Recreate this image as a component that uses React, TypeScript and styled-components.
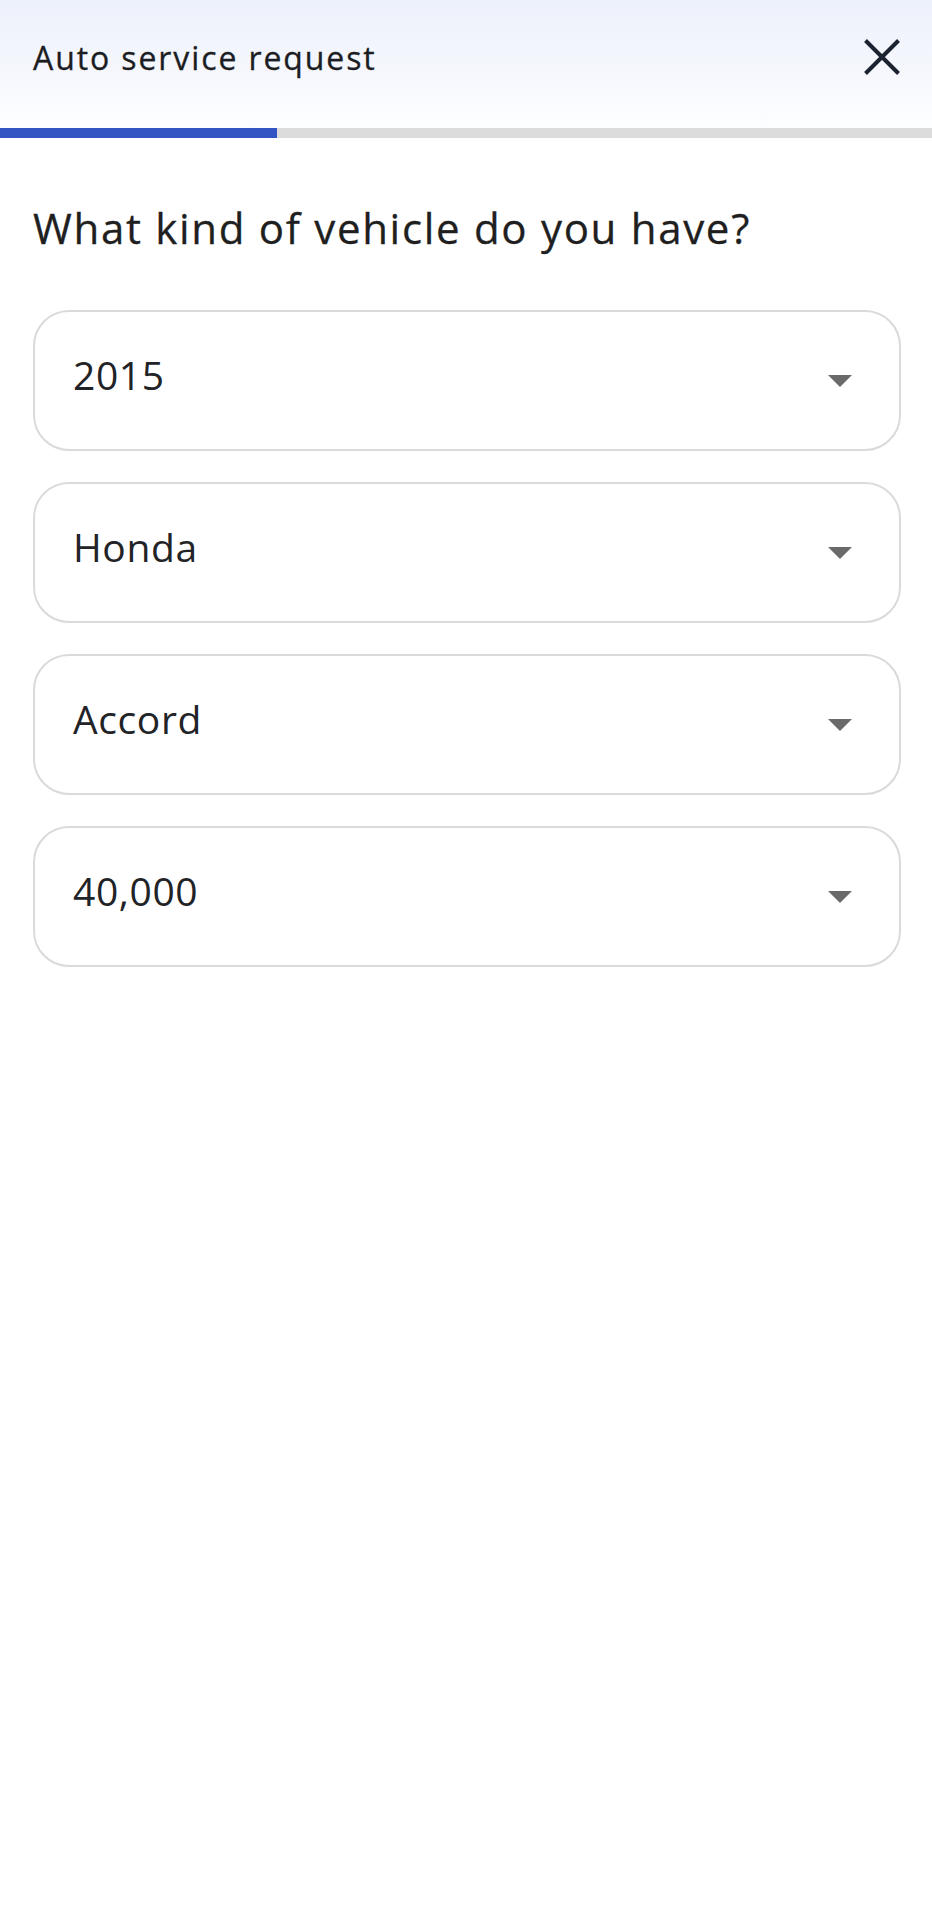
import React from "react";
import styled, { createGlobalStyle } from "styled-components";

const Global = createGlobalStyle`
  html, body { margin: 0; padding: 0; background: #ffffff; }
  body { font-family: "Open Sans", Roboto, "Noto Sans", Arial, sans-serif; color: #202124; }
  * { box-sizing: border-box; }
`;

const Page = styled.div`
  width: 932px;
  min-height: 1920px;
  background: #ffffff;
  display: flex;
  flex-direction: column;
`;

const Header = styled.header`
  height: 128px;
  display: flex;
  align-items: center;
  justify-content: space-between;
  padding: 0 25px 14px 33px;
  background: linear-gradient(180deg, #edf1fb 0%, #f5f7fd 55%, #fdfeff 100%);
`;

const Title = styled.h1`
  margin: 0;
  font-family: "Open Sans", Roboto, sans-serif;
  font-weight: 400;
  font-size: 32px;
  letter-spacing: 1.9px;
  color: #1b1d22;
  -webkit-text-stroke: 0.3px #1b1d22;
`;

const CloseButton = styled.button`
  border: 0;
  background: transparent;
  padding: 0;
  width: 50px;
  height: 50px;
  display: flex;
  align-items: center;
  justify-content: center;
  cursor: pointer;
`;

const Track = styled.div`
  height: 10px;
  background: #dcdcdc;
  display: flex;
`;

const Fill = styled.div`
  height: 100%;
  background: #3354c3;
`;

const Body = styled.main`
  padding: 62px 31px 0 33px;
  display: flex;
  flex-direction: column;
`;

const Question = styled.h2`
  margin: 0 0 54px 0;
  font-family: "Open Sans", Roboto, sans-serif;
  font-weight: 400;
  font-size: 42px;
  line-height: 56px;
  letter-spacing: 1.7px;
  color: #1f1f1f;
  -webkit-text-stroke: 0.3px #1f1f1f;
`;

const Fields = styled.div`
  display: flex;
  flex-direction: column;
  gap: 31px;
`;

const SelectBox = styled.div`
  height: 141px;
  border: 2px solid #dadada;
  border-radius: 36px;
  display: flex;
  align-items: center;
  justify-content: space-between;
  padding: 0 47px 0 38px;
  background: #ffffff;
`;

const Value = styled.span`
  font-family: "Open Sans", Roboto, sans-serif;
  font-size: 39px;
  letter-spacing: 0.6px;
  color: #222327;
  margin-bottom: 12px;
`;

const Caret = styled.span`
  width: 0;
  height: 0;
  border-left: 12px solid transparent;
  border-right: 12px solid transparent;
  border-top: 12px solid #6a6a6a;
`;

const values = ["2015", "Honda", "Accord", "40,000"];

export default function App() {
  return (
    <Page>
      <Global />
      <Header>
        <Title>Auto service request</Title>
        <CloseButton aria-label="Close">
          <svg width="50" height="50" viewBox="0 0 50 50">
            <path d="M8.5 8.5 L41.5 41.5 M41.5 8.5 L8.5 41.5" stroke="#1b2230" strokeWidth="4" strokeLinecap="butt" fill="none" />
          </svg>
        </CloseButton>
      </Header>
      <Track>
        <Fill style={{ width: "277px" }} />
      </Track>
      <Body>
        <Question>What kind of vehicle do you have?</Question>
        <Fields>
          {values.map((v) => (
            <SelectBox key={v}>
              <Value>{v}</Value>
              <Caret />
            </SelectBox>
          ))}
        </Fields>
      </Body>
    </Page>
  );
}
